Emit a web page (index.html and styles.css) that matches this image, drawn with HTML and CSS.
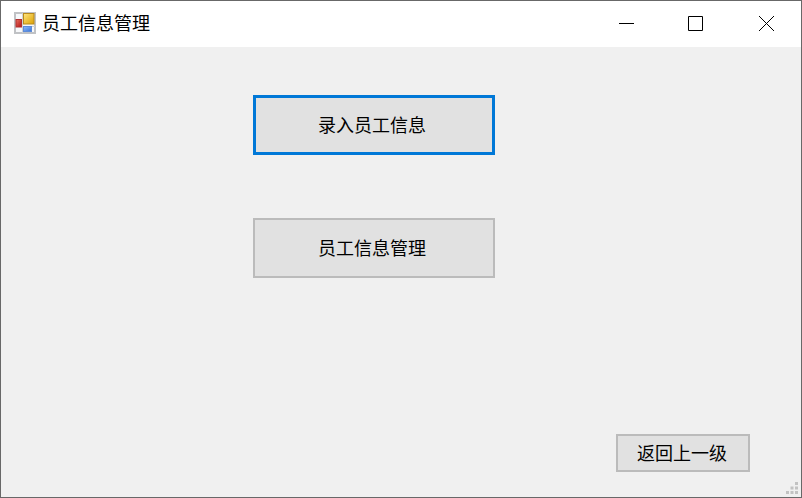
FILE: index.html
```html
<!DOCTYPE html>
<html lang="zh-CN">
<head>
<meta charset="utf-8">
<title>员工信息管理</title>
<link rel="stylesheet" href="styles.css">
</head>
<body>
<div class="window">
  <header class="titlebar">
    <svg class="app-icon" width="22" height="22" viewBox="0 0 22 22">
      <defs>
        <linearGradient id="gold" x1="0" y1="0" x2="1" y2="1"><stop offset="0" stop-color="#ffe680"/><stop offset="1" stop-color="#dca000"/></linearGradient>
        <linearGradient id="red" x1="0" y1="0" x2="1" y2="1"><stop offset="0" stop-color="#e87060"/><stop offset="1" stop-color="#b41414"/></linearGradient>
        <linearGradient id="blue" x1="0" y1="0" x2="1" y2="1"><stop offset="0" stop-color="#8ebcff"/><stop offset="1" stop-color="#3a72d4"/></linearGradient>
      </defs>
      <rect x="1" y="1" width="20" height="20" fill="#f7f8fa" stroke="#c0c2c5" stroke-width="2"/>
      <path d="M8.5 1v20M1 14.5h20" stroke="#cfd1d4" fill="none"/>
      <rect x="9.5" y="1.5" width="10.5" height="10.5" fill="url(#gold)" stroke="#b98a1c"/>
      <rect x="2" y="7.5" width="5.5" height="7.5" fill="url(#red)" stroke="#b03030"/>
      <rect x="9.5" y="14.5" width="8" height="5" fill="url(#blue)" stroke="#5e8cd8"/>
    </svg>
    <h1 class="title">员工信息管理</h1>
    <div class="controls">
      <svg class="minimize" width="15" height="15" viewBox="0 0 15 15"><path d="M0 7.5h15"/></svg>
      <svg class="maximize" width="15" height="15" viewBox="0 0 15 15"><path d="M.5 .5h14v14H.5z"/></svg>
      <svg width="15" height="15" viewBox="0 0 15 15"><path d="M0 0l15 15M15 0L0 15"/></svg>
    </div>
  </header>
  <main class="client">
    <button class="btn btn-main btn-default">录入员工信息</button>
    <button class="btn btn-main">员工信息管理</button>
    <button class="btn btn-back">返回上一级</button>
  </main>
  <svg class="grip" width="12" height="12" viewBox="0 0 12 12">
    <path d="M9 0h3v3H9zM4.500 4.500h3v3h-3zM9 4.500h3v3H9zM0 9h3v3H0zM4.500 9h3v3h-3zM9 9h3v3H9z"/>
  </svg>
</div>
</body>
</html>
```
FILE: styles.css
```css
* { box-sizing: border-box; }

body {
  margin: 0;
  font-family: "Noto Sans CJK SC", sans-serif;
  font-size: 18px;
  color: #000;
}

.window {
  position: relative;
  display: flex;
  flex-direction: column;
  width: 802px;
  height: 498px;
  border: 1px solid #686868;
  background: #f0f0f0;
}

.titlebar {
  display: flex;
  align-items: center;
  height: 46px;
  padding: 0 27px 2px 13px;
  background: #fff;
}

.title {
  margin: 0 0 0 6px;
  font-size: 18px;
  font-weight: 400;
  line-height: 26px;
  padding-bottom: 2px;
}

.controls {
  display: flex;
  margin-left: auto;
}

.controls svg {
  fill: none;
  stroke: #000;
  stroke-width: 1;
}

.minimize { margin-right: 54px; }

.maximize { margin-right: 56px; }

.client {
  display: flex;
  flex: 1;
  flex-direction: column;
  align-items: flex-start;
  padding: 48px 51px 25px 252px;
}

.btn {
  border: 2px solid #bbb;
  background: #e1e1e1;
  color: #000;
  font: inherit;
  line-height: 26px;
}

.btn-main {
  width: 242px;
  height: 60px;
  margin-bottom: 63px;
  padding: 0 4px 2px 0;
}

.btn-default { border: 3px solid #0078d7; }

.btn-back {
  align-self: flex-end;
  width: 134px;
  height: 38px;
  margin-top: auto;
  padding: 0 2px 3px 0;
}

.grip {
  position: absolute;
  right: 3px;
  bottom: 3px;
  fill: #c2c2c2;
}
```
